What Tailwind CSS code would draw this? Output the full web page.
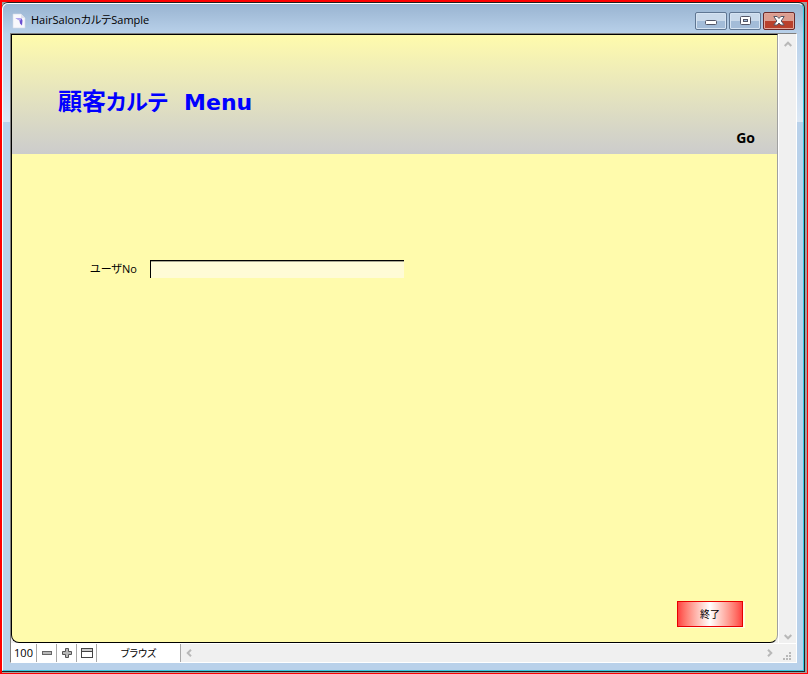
<!DOCTYPE html>
<html lang="ja">
<head>
  <meta charset="UTF-8">
  <meta name="viewport" content="width=device-width, initial-scale=1">
  <title>HairSalonカルテSample</title>
  <script src="https://cdn.jsdelivr.net/npm/@tailwindcss/browser@4"></script>
</head>
<body class="flex flex-col min-h-screen bg-[#a0a0a0] border-l-2 border-t-2 border-r border-b border-[#ff0000] font-['Open_Sans','Noto_Sans_CJK_JP',sans-serif] text-[11px] text-black">

  <!-- Window frame -->
  <div class="flex-1 flex flex-col mr-0.5 mb-px border-t border-r border-b border-[#202020] rounded-t-md">
    <div class="flex-1 flex flex-col border-l border-t border-l-white border-t-white border-r border-b border-r-[#35c8e0] border-b-[#35c8e0] rounded-t-md bg-[linear-gradient(to_bottom,#99b4d1,#b9d1ea_30px,#dce8f5_118px,#b9d1ea_118px)]">

      <!-- Title bar -->
      <header class="flex items-center h-[29px] pt-1 pl-2 pr-2">
        <svg class="w-4 h-4 mr-1" viewBox="0 0 16 16">
          <path d="M2 1h8l4 4v10H2z" fill="#f8f8fc" stroke="#d5dbe8" stroke-width=".6"/>
          <path d="M10 1v4h4z" fill="#dfe3ee"/>
          <path d="M4.500 5l6 .5 1 2-.5 5-2-2-.5-3z" fill="#6a4fd0"/>
          <path d="M4.500 5l6 .5-1.500 2.500z" fill="#b8aef4"/>
        </svg>
        <h1 class="flex-1 whitespace-nowrap [font-feature-settings:'palt']">HairSalonカルテSample</h1>
        <div class="flex gap-0.5">
          <button type="button" aria-label="最小化" class="flex items-center justify-center w-8 h-[18px] rounded-xs border border-[#5f7692] bg-linear-to-b from-[#c9d9ea] from-50% to-[#a3bcd8] to-50% shadow-[inset_0_0_0_1px_#d5e3f2]">
            <svg class="w-3 h-3" viewBox="0 0 12 12"><rect x=".5" y="5.5" width="11" height="4" rx="1" fill="#fff" stroke="#535666"/></svg>
          </button>
          <button type="button" aria-label="最大化" class="flex items-center justify-center w-8 h-[18px] rounded-xs border border-[#5f7692] bg-linear-to-b from-[#c9d9ea] from-50% to-[#a3bcd8] to-50% shadow-[inset_0_0_0_1px_#d5e3f2]">
            <svg class="w-3 h-3" viewBox="0 0 12 12"><rect x="1.5" y="1.5" width="10" height="8" rx="1" fill="#fff" stroke="#535666"/><rect x="4.5" y="4.500" width="4" height="2" fill="#a3bcd8" stroke="#535666"/></svg>
          </button>
          <button type="button" aria-label="閉じる" class="flex items-center justify-center w-8 h-[18px] rounded-xs border border-[#6b2a2a] bg-linear-to-b from-[#dc9d90] from-50% to-[#b9402c] to-50% shadow-[inset_0_0_0_1px_#e2a79b]">
            <svg class="w-3 h-3" viewBox="0 0 12 12"><path d="M.8 1.500h3.400L6 3.500l1.800-2h3.400L8.200 6l3 4H7.800L6 8l-1.800 2H.8l3-4z" fill="#fff" stroke="#535666"/></svg>
          </button>
        </div>
      </header>

      <!-- Client area -->
      <div class="flex-1 flex flex-col ml-[7px] mr-1.5 mb-[7px] border border-[#808080] border-r-white border-b-white bg-[#f0f0f0]">
        <div class="flex-1 flex">
          <main class="flex-1 flex flex-col border-l border-t border-b border-black border-r border-r-[#a0a0a0] rounded-b-lg bg-[#fffbac] overflow-hidden">
            <div class="flex flex-col justify-between h-[119px] bg-linear-to-b from-[#fffbac] to-[#cccccc]">
              <h2 class="flex items-baseline gap-4 pt-12 pl-[46px] text-2xl leading-9 font-bold text-[#0000ff]">
                <span class="[font-feature-settings:'palt']">顧客<span class="text-[22px]">カルテ</span></span>
                <span class="font-['DejaVu_Sans'] text-[22px]">Menu</span>
              </h2>
              <button type="button" class="self-end mr-[22px] mb-1.5 text-sm font-bold">Go</button>
            </div>

            <form class="flex-1 flex flex-col justify-between">
              <div class="flex items-center pt-[106px] pl-[78px]">
                <label for="userno" class="w-[60px] whitespace-nowrap [font-feature-settings:'palt']">ユーザNo</label>
                <input type="text" id="userno" class="w-[254px] h-[18px] px-1 border-l border-t border-black bg-[#fffbd6] shadow-[inset_0_1px_0_#a8a690] focus:outline-none">
              </div>
              <button type="button" class="self-end w-[66px] h-[26px] mr-[34px] mb-[15px] border border-[#e80000] bg-linear-to-r from-[#ff4040] via-white to-[#ff4040] shadow-[2px_1px_0_#fffde0] text-[10px]">終了</button>
            </form>
          </main>

          <!-- Vertical scroll bar -->
          <div class="flex flex-col items-center justify-between w-[18px] pt-1.5 pb-0.5 border-l border-white text-[#b8b8b8]">
            <svg class="w-2 h-2" viewBox="0 0 8 8" fill="none" stroke="currentColor" stroke-width="2"><path d="M.7 6L4 2.7 7.3 6"/></svg>
            <svg class="w-2 h-2" viewBox="0 0 8 8" fill="none" stroke="currentColor" stroke-width="2"><path d="M.7 2L4 5.3 7.3 2"/></svg>
          </div>
        </div>

        <!-- Status bar -->
        <footer class="flex h-[19px] border-t border-white">
          <div class="flex bg-white divide-x divide-[#a8a8a8] border-r border-[#a8a8a8]">
            <button type="button" class="w-[26px]">100</button>
            <button type="button" aria-label="縮小" class="flex items-center justify-center w-5">
              <svg class="w-3 h-3" viewBox="0 0 12 12"><rect x="1.5" y="4.5" width="9" height="3" fill="#b8b8b8" stroke="#666"/></svg>
            </button>
            <button type="button" aria-label="拡大" class="flex items-center justify-center w-5">
              <svg class="w-3 h-3" viewBox="0 0 12 12"><path d="M4.5 1.5h3v3h3v3h-3v3h-3v-3h-3v-3h3z" fill="#b8b8b8" stroke="#555"/></svg>
            </button>
            <button type="button" aria-label="ステータスエリア" class="flex items-center justify-center w-5">
              <svg class="w-3 h-3" viewBox="0 0 12 12"><rect x=".5" y="1.5" width="11" height="9" fill="#fff" stroke="#444"/><path d="M1 2h10v2H1z" fill="#ccc"/><path d="M1 4.5h10" stroke="#444"/></svg>
            </button>
            <button type="button" class="w-[83px] text-[10px] [font-feature-settings:'palt']">ブラウズ</button>
          </div>
          <div class="flex-1 flex items-center justify-between pl-1 pr-1 text-[#b8b8b8]">
            <svg class="w-2 h-2" viewBox="0 0 8 8" fill="none" stroke="currentColor" stroke-width="2"><path d="M6 .7L2.7 4 6 7.3"/></svg>
            <svg class="w-2 h-2" viewBox="0 0 8 8" fill="none" stroke="currentColor" stroke-width="2"><path d="M2 .7L5.3 4 2 7.3"/></svg>
          </div>
          <div class="flex items-end justify-center w-[18px] pb-0.5">
            <svg class="w-2 h-2" viewBox="0 0 8 8" fill="#b8b8b8"><path d="M6 0h2v2H6zM3 3h2v2H3zM6 3h2v2H6zM0 6h2v2H0zM3 6h2v2H3zM6 6h2v2H6z"/></svg>
          </div>
        </footer>
      </div>
    </div>
  </div>
</body>
</html>
